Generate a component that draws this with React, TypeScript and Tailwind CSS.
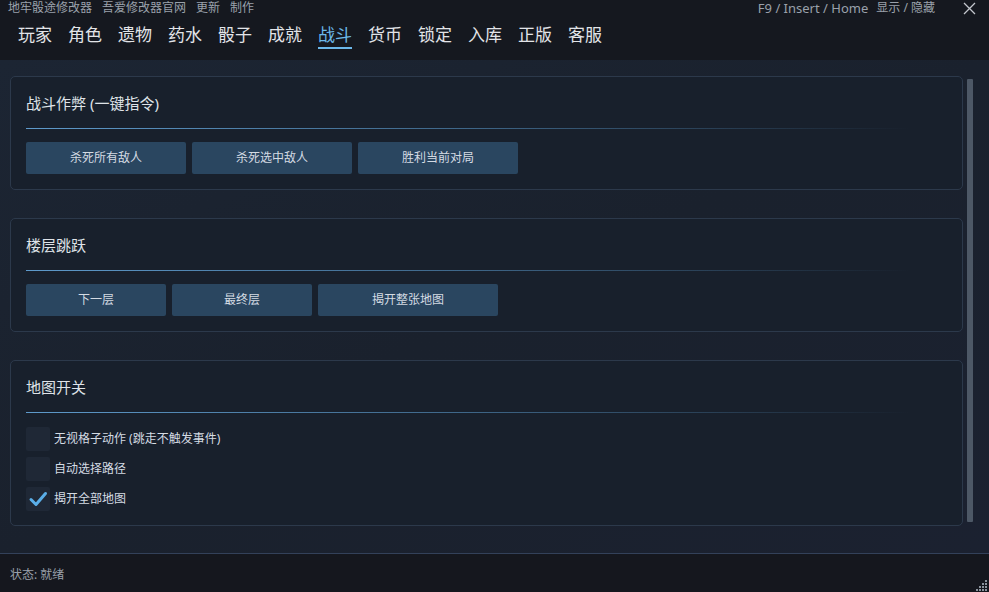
import React from "react";

const font = { fontFamily: '"Noto Sans", "Noto Sans CJK SC", sans-serif' };

const tabs = ["玩家", "角色", "遗物", "药水", "骰子", "成就", "战斗", "货币", "锁定", "入库", "正版", "客服"];

function Card({ title, children }: { title: string; children: React.ReactNode }) {
  return (
    <div className="rounded-[5px] border border-[#2c394b] bg-[#18202c] px-[15px] pb-[15px]">
      <div className="h-[51px] flex items-end pb-[17px] text-[15px] leading-none text-[#dfe3e8]">{title}</div>
      <div className="h-px w-[96%] bg-gradient-to-r from-[#5e9acb] via-[#3e6688] to-transparent" />
      <div className="pt-[13px]">{children}</div>
    </div>
  );
}

function Btn({ label, w }: { label: string; w: string }) {
  return (
    <div className={`${w} h-[32px] rounded-[2px] bg-[#2a4660] flex items-center justify-center text-[12px] text-[#d4dbe3]`}>
      {label}
    </div>
  );
}

function Check({ label, checked }: { label: string; checked?: boolean }) {
  return (
    <div className="flex items-center h-[30px]">
      <div className="w-[24px] h-[24px] rounded-[2px] bg-[#1f2836] flex items-center justify-center">
        {checked && (
          <svg width="20" height="20" viewBox="0 0 20 20">
            <path d="M3 10.5 L8 15.5 L17.5 4.5" fill="none" stroke="#5aaee8" strokeWidth="3" strokeLinecap="round" strokeLinejoin="round" />
          </svg>
        )}
      </div>
      <span className="ml-[4px] text-[12px] text-[#d4dbe3]">{label}</span>
    </div>
  );
}

export default function App() {
  return (
    <div className="w-[989px] h-[592px] flex flex-col bg-[#15181f] overflow-hidden" style={font}>
      {/* top bar */}
      <div className="h-[60px] shrink-0 bg-[#15181f] flex flex-col">
        <div className="h-[16px] flex items-center justify-between pl-[8px] pr-[13px] text-[12px] leading-[16px] text-[#9aa1ab]">
          <div className="flex gap-[10px]">
            <span>地牢骰途修改器</span>
            <span>吾爱修改器官网</span>
            <span>更新</span>
            <span>制作</span>
          </div>
          <div className="flex items-center">
            <span className="text-[13px] leading-[16px]">F9 / Insert / Home</span>
            <span className="ml-[8px]">显示 / 隐藏</span>
            <svg className="ml-[28px]" width="13" height="13" viewBox="0 0 13 13">
              <path d="M1 1 L12 12 M12 1 L1 12" stroke="#c3c7cd" strokeWidth="1.3" />
            </svg>
          </div>
        </div>
        <div className="flex pl-[18px] gap-[16px] mt-[9px]">
          {tabs.map((t) => (
            <div key={t} className="flex flex-col items-center">
              <span className={`text-[17px] leading-[20px] ${t === "战斗" ? "text-[#6cb8ea]" : "text-[#e2e4e8]"}`}>{t}</span>
              <div className={`mt-[2px] h-[2px] w-full ${t === "战斗" ? "bg-[#6cb8ea]" : "bg-transparent"}`} />
            </div>
          ))}
        </div>
      </div>

      {/* content */}
      <div className="flex-1 flex bg-gradient-to-br from-[#1c2533] via-[#1a212d] to-[#1b2130] pl-[10px] pr-[16px] pt-[16px] gap-[4px] border-b border-[#33415a]">
        <div className="flex-1 flex flex-col gap-[28px]">
          <Card title="战斗作弊 (一键指令)">
            <div className="flex gap-[6px]">
              <Btn label="杀死所有敌人" w="w-[160px]" />
              <Btn label="杀死选中敌人" w="w-[160px]" />
              <Btn label="胜利当前对局" w="w-[160px]" />
            </div>
          </Card>
          <Card title="楼层跳跃">
            <div className="flex gap-[6px]">
              <Btn label="下一层" w="w-[140px]" />
              <Btn label="最终层" w="w-[140px]" />
              <Btn label="揭开整张地图" w="w-[180px]" />
            </div>
          </Card>
          <Card title="地图开关">
            <div className="flex flex-col -mt-[2px] -mb-[4px]">
              <Check label="无视格子动作 (跳走不触发事件)" />
              <Check label="自动选择路径" />
              <Check label="揭开全部地图" checked />
            </div>
          </Card>
        </div>
        <div className="w-[6px] mt-[3px] h-[443px] rounded-[1px] bg-[#4d5866]" />
      </div>

      {/* status */}
      <div className="h-[38px] shrink-0 bg-[#15171e] flex items-center justify-between pl-[10px] pt-[3px] relative">
        <span className="text-[12px] text-[#9aa1ab]">状态: 就绪</span>
        <svg className="absolute right-[1px] bottom-[1px]" width="12" height="12" viewBox="0 0 12 12">
          {[
            [9, 1], [6, 4], [9, 4], [3, 7], [6, 7], [9, 7], [0, 10], [3, 10], [6, 10], [9, 10],
          ].map(([x, y], i) => (
            <rect key={i} x={x} y={y} width="2" height="2" fill="#8a929c" />
          ))}
        </svg>
      </div>
    </div>
  );
}
